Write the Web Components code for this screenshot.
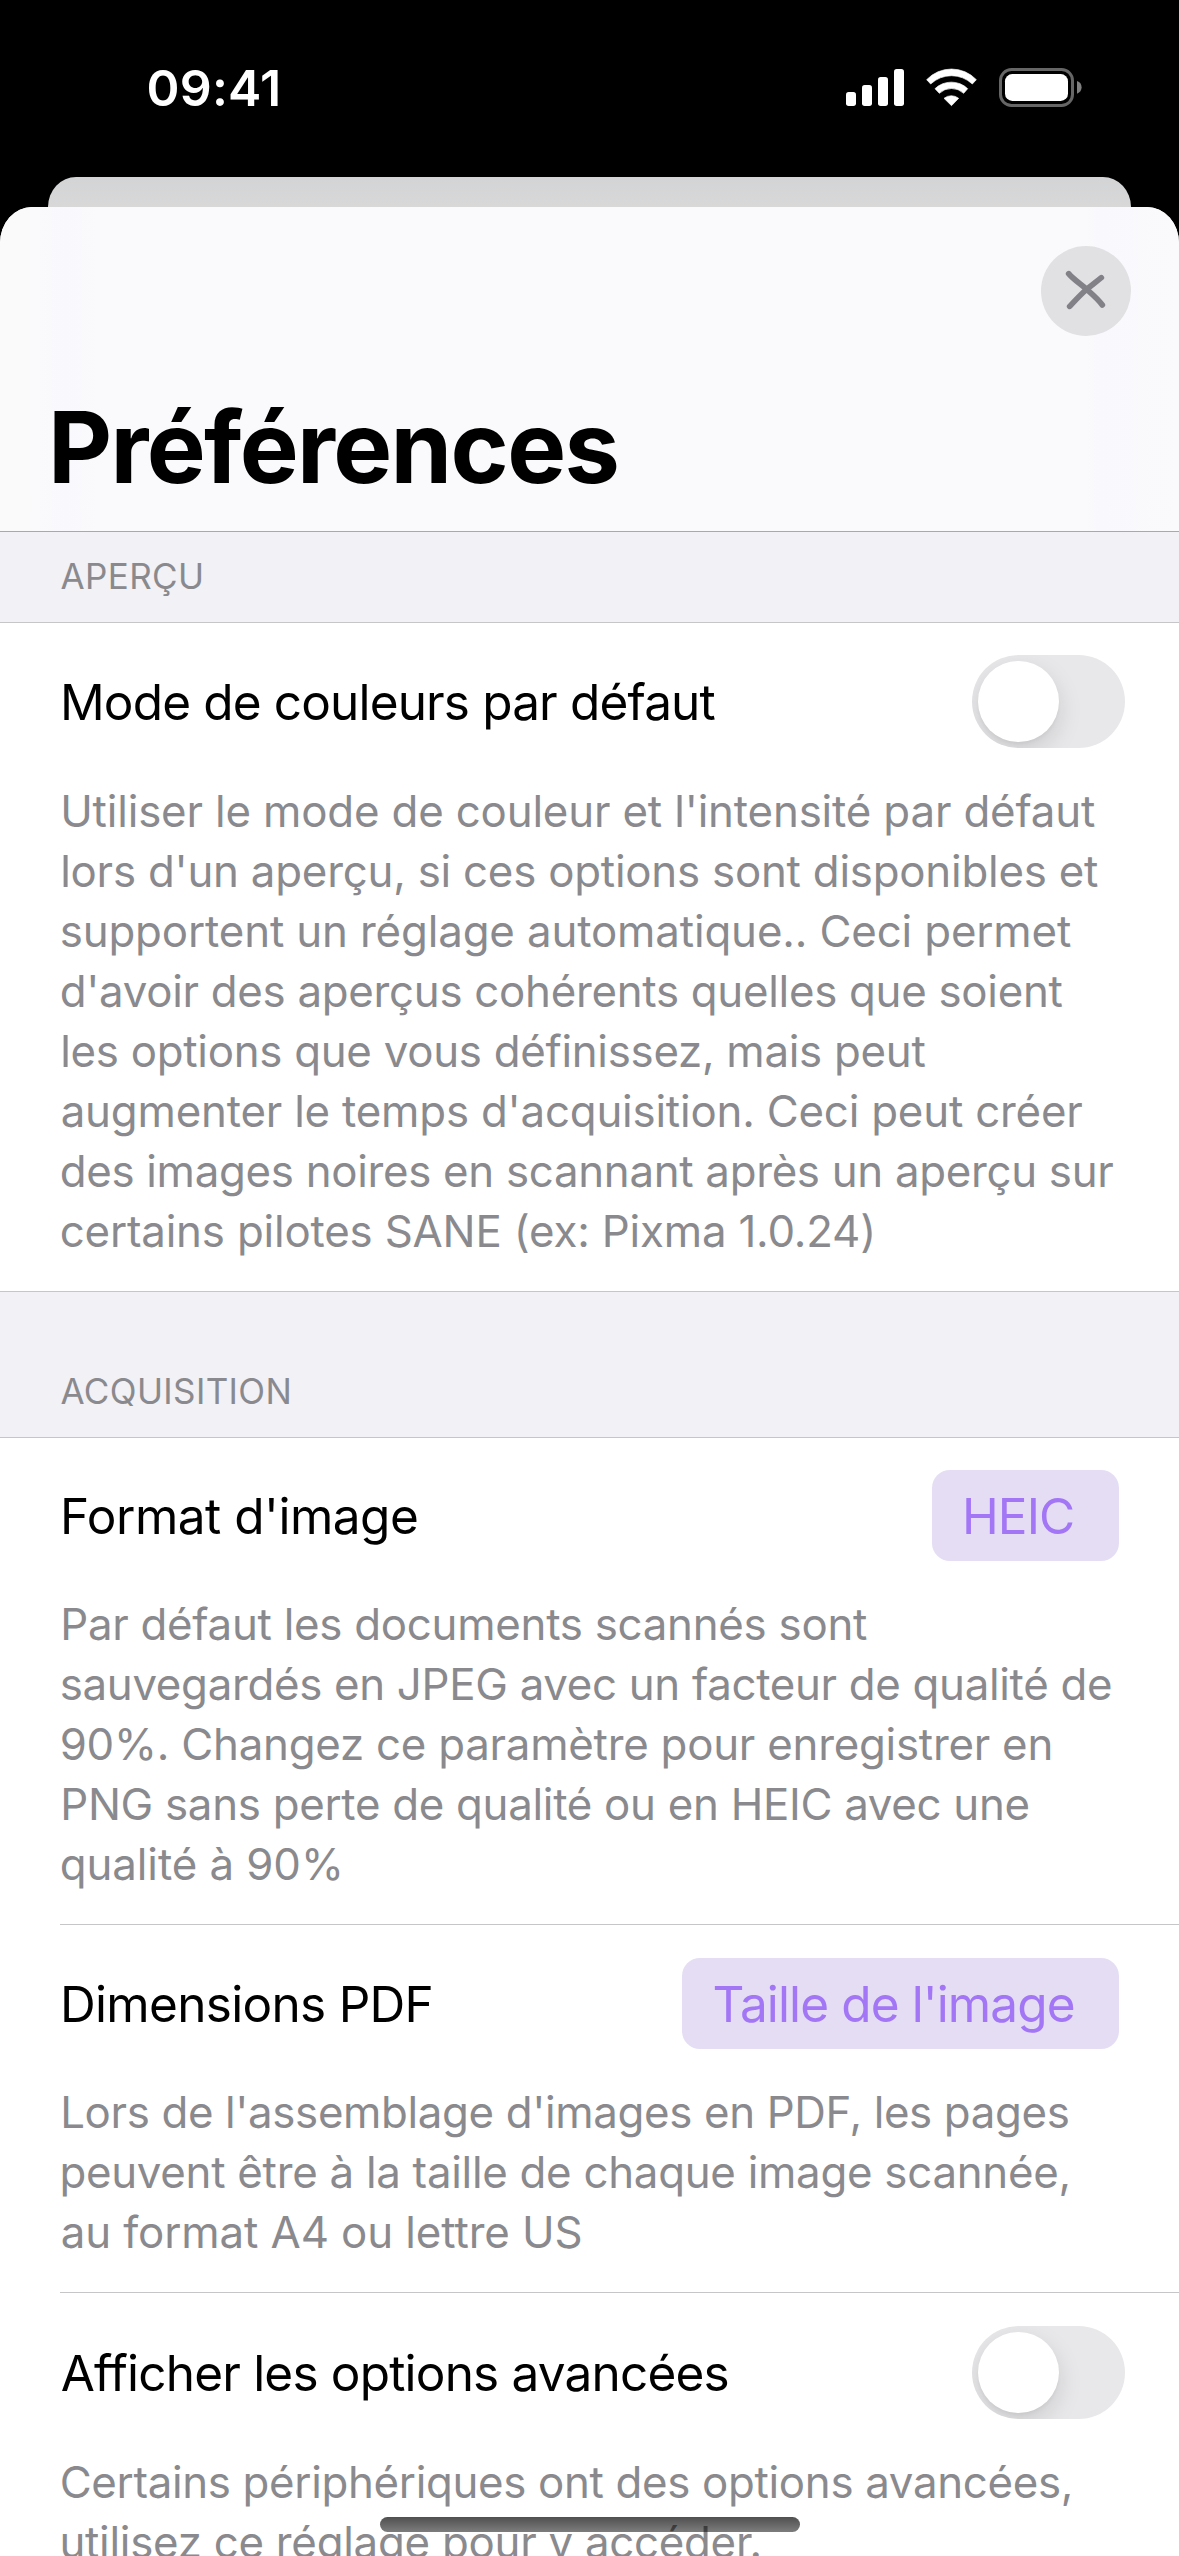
<!DOCTYPE html>
<html lang="fr">
<head>
<meta charset="utf-8">
<title>Préférences</title>
<style>
html,body{margin:0;background:#000;width:1179px;height:2556px;overflow:hidden}
body{font-family:Inter,"Liberation Sans",sans-serif}
</style>
</head>
<body>
<app-screen>
  <status-bar slot="status"><fit-line x0="148.5" x1="278" size="50" weight="570">09:41</fit-line></status-bar>
  <pref-header slot="sheet"><fit-line x0="54" x1="616.5" size="99" weight="700">Préférences</fit-line></pref-header>
  <pref-section slot="sheet" style="--h:90px;--pb:16px">
    <fit-line slot="title" x0="60.5" x1="201" size="35">APERÇU</fit-line>
    <pref-row>
      <fit-line slot="label" x0="64" x1="715.5" size="49.5" weight="410">Mode de couleurs par défaut</fit-line>
      <toggle-switch slot="control"></toggle-switch>
      <fit-line x0="63.2" x1="1095">Utiliser le mode de couleur et l'intensité par défaut</fit-line>
      <fit-line x0="63.2" x1="1098">lors d'un aperçu, si ces options sont disponibles et</fit-line>
      <fit-line x0="61.7" x1="1071">supportent un réglage automatique.. Ceci permet</fit-line>
      <fit-line x0="61.7" x1="1062.5">d'avoir des aperçus cohérents quelles que soient</fit-line>
      <fit-line x0="63.2" x1="925.5">les options que vous définissez, mais peut</fit-line>
      <fit-line x0="61.7" x1="1082.3">augmenter le temps d'acquisition. Ceci peut créer</fit-line>
      <fit-line x0="61.7" x1="1113.3">des images noires en scannant après un aperçu sur</fit-line>
      <fit-line x0="61.7" x1="872.2">certains pilotes SANE (ex: Pixma 1.0.24)</fit-line>
    </pref-row>
  </pref-section>
  <pref-section slot="sheet" style="--h:145px;--pb:16px;--bt:1px">
    <fit-line slot="title" x0="60.5" x1="289.5" size="35">ACQUISITION</fit-line>
    <pref-row>
      <fit-line slot="label" x0="64" x1="417" size="49.5" weight="410">Format d'image</fit-line>
      <value-pill slot="control" style="width:187px"><fit-line x0="34" x1="141" size="49.5">HEIC</fit-line></value-pill>
      <fit-line x0="63.2" x1="867">Par défaut les documents scannés sont</fit-line>
      <fit-line x0="61.7" x1="1111">sauvegardés en JPEG avec un facteur de qualité de</fit-line>
      <fit-line x0="61.7" x1="1050.4">90%. Changez ce paramètre pour enregistrer en</fit-line>
      <fit-line x0="63.2" x1="1028.6">PNG sans perte de qualité ou en HEIC avec une</fit-line>
      <fit-line x0="61.7" x1="339.9">qualité à 90%</fit-line>
    </pref-row>
    <pref-row divided>
      <fit-line slot="label" x0="64" x1="431.6" size="49.5" weight="410">Dimensions PDF</fit-line>
      <value-pill slot="control" style="width:437px"><fit-line x0="32.5" x1="391.7" size="49.5">Taille de l'image</fit-line></value-pill>
      <fit-line x0="63.2" x1="1067.7">Lors de l'assemblage d'images en PDF, les pages</fit-line>
      <fit-line x0="62.4" x1="1068.5">peuvent être à la taille de chaque image scannée,</fit-line>
      <fit-line x0="61.7" x1="580.5">au format A4 ou lettre US</fit-line>
    </pref-row>
    <pref-row divided>
      <fit-line slot="label" x0="61.7" x1="727.5" size="49.5" weight="410">Afficher les options avancées</fit-line>
      <toggle-switch slot="control"></toggle-switch>
      <fit-line x0="61.7" x1="1070.7">Certains périphériques ont des options avancées,</fit-line>
      <fit-line x0="62.4" x1="759.4">utilisez ce réglage pour y accéder.</fit-line>
    </pref-row>
  </pref-section>
</app-screen>
<script>
const define = (name, html, setup) => customElements.define(name, class extends HTMLElement {
  constructor() {
    super();
    this.attachShadow({mode: 'open'}).innerHTML = html;
  }
  connectedCallback() { if (setup) setup(this); }
});

// One line of text, tracked so that its ink runs from x0 to x1 inside its container.
const ctx = document.createElement('canvas').getContext('2d');
define('fit-line', `<style>
  :host{display:block;white-space:nowrap;line-height:60px}
</style><slot></slot>`, el => {
  const size = el.getAttribute('size') || '43.8', weight = el.getAttribute('weight') || '410';
  const x0 = +el.getAttribute('x0'), x1 = +el.getAttribute('x1'), text = el.textContent;
  el.style.fontSize = size + 'px';
  el.style.fontWeight = weight;
  ctx.font = `${weight} ${size}px Inter, "Liberation Sans", sans-serif`;
  const m = ctx.measureText(text);
  const ink = m.actualBoundingBoxRight + m.actualBoundingBoxLeft;
  el.style.letterSpacing = ((x1 - x0 - ink) / (text.length - 1)).toFixed(3) + 'px';
  el.style.marginLeft = (x0 + m.actualBoundingBoxLeft).toFixed(2) + 'px';
});

define('app-screen', `<style>
  :host{display:flex;flex-direction:column;width:1179px;height:2556px;background:#000;overflow:hidden}
  .back{flex:none;height:30px;margin:0 48px;border-radius:30px 30px 0 0/32px 32px 0 0;background:linear-gradient(#d3d4d5,#d8d8d9)}
  .sheet{flex:none;height:2349px;overflow:hidden;background:#fff;border-radius:32px 32px 0 0/36px 36px 0 0}
  .home{position:absolute;left:380px;top:2517px;width:420px;height:15px;border-radius:7.5px;background:linear-gradient(rgba(0,0,0,.69),rgba(0,0,0,.51))}
</style>
<slot name="status"></slot><div class="back"></div>
<div class="sheet"><slot name="sheet"></slot></div><div class="home"></div>`);

define('status-bar', `<style>
  :host{display:flex;flex:none;height:177px;color:#fff;align-items:flex-start;justify-content:space-between}
  .time{padding-top:58px}
  svg{width:240px;height:42px;margin:66px 96px 0 0}
</style>
<div class="time"><slot></slot></div>
<svg viewBox="129 78 720 126" fill="#fff">
  <rect x="138" y="156" width="30" height="42" rx="8"/><rect x="186" y="135" width="30" height="63" rx="8"/>
  <rect x="234" y="111" width="30" height="87" rx="8"/><rect x="282" y="87" width="30" height="111" rx="8"/>
  <g stroke="#fff" stroke-width="2" stroke-linejoin="round">
    <path d="M380 119A103 103 0 0 1 529 119L517 132A91 91 0 0 0 392 132Z"/>
    <path d="M405 146A71 71 0 0 1 503 146L491 160A53 53 0 0 0 418 160Z"/>
    <path d="M432 175A35 35 0 0 1 476 175L454.500 197Z"/>
  </g>
  <rect x="601.500" y="88.500" width="216" height="108" rx="33" fill="none" stroke="#666" stroke-width="9"/>
  <rect x="615" y="102" width="189" height="81" rx="22"/>
  <path d="M831 123A20 20 0 0 1 831 161Z" fill="#808080"/>
</svg>`);

define('pref-header', `<style>
  :host{display:flex;flex-direction:column;height:324px;border-bottom:1px solid #a8a8ad;color:#000;
    background:linear-gradient(90deg,#fafafb 0,#fafafc 35px,#f9f8fd 65px,#fafafc 100px,#fafafc 1085px,#f9f8fd 1100px,#fafafc 1179px)}
  svg{width:90px;height:90px;margin:39px 48px 0 auto;flex:none}
  .title{margin-top:81px}
</style>
<svg viewBox="723 618 270 270"><circle cx="858" cy="753" r="135" fill="#e1e1e3"/>
  <g fill="none" stroke="#828187" stroke-width="17" stroke-linecap="round">
    <path d="M806 701C820 718 842 732 860 748S893 776 907 795"/><path d="M904 713C888 726 876 735 860 748S824 783 809 799"/>
  </g></svg>
<div class="title"><slot></slot></div>`);

define('pref-section', `<style>
  :host{display:block}
  .head{box-sizing:border-box;display:flex;align-items:flex-end;height:calc(var(--h) + var(--bt,0px));padding-bottom:var(--pb);
    background:#f2f1f6;border-top:var(--bt,0px) solid #c6c6c8;color:#8a8a8e}
  .rows{border-top:1px solid #c6c6c8}
</style>
<div class="head"><slot name="title"></slot></div><div class="rows"><slot></slot></div>`);

define('pref-row', `<style>
  :host{display:block;padding-bottom:29px;color:#8a8a8e}
  .sep{display:none;height:1px;margin:0 0 1px 60px;background:#c6c6c8}
  :host([divided]) .sep{display:block}
  .top{display:flex;align-items:center;justify-content:space-between;padding:32px 0 34px;color:#000}
</style>
<div class="sep"></div>
<div class="top"><slot name="label"></slot><slot name="control"></slot></div><slot></slot>`);

define('toggle-switch', `<style>
  :host{box-sizing:border-box;display:block;width:153px;height:93px;margin-right:54px;padding:6px;border-radius:46.5px;background:#e8e8ea;overflow:hidden}
  .knob{width:81px;height:81px;border-radius:50%;background:#fff;box-shadow:0 9px 24px rgba(0,0,0,.13),0 3px 3px rgba(0,0,0,.03)}
</style><div class="knob"></div>`);

define('value-pill', `<style>
  :host{box-sizing:border-box;display:flex;align-items:center;height:91px;margin-right:60px;border-radius:18px;background:#e5ddf4;color:#a276f5}
</style><slot></slot>`);
</script>
</body>
</html>
